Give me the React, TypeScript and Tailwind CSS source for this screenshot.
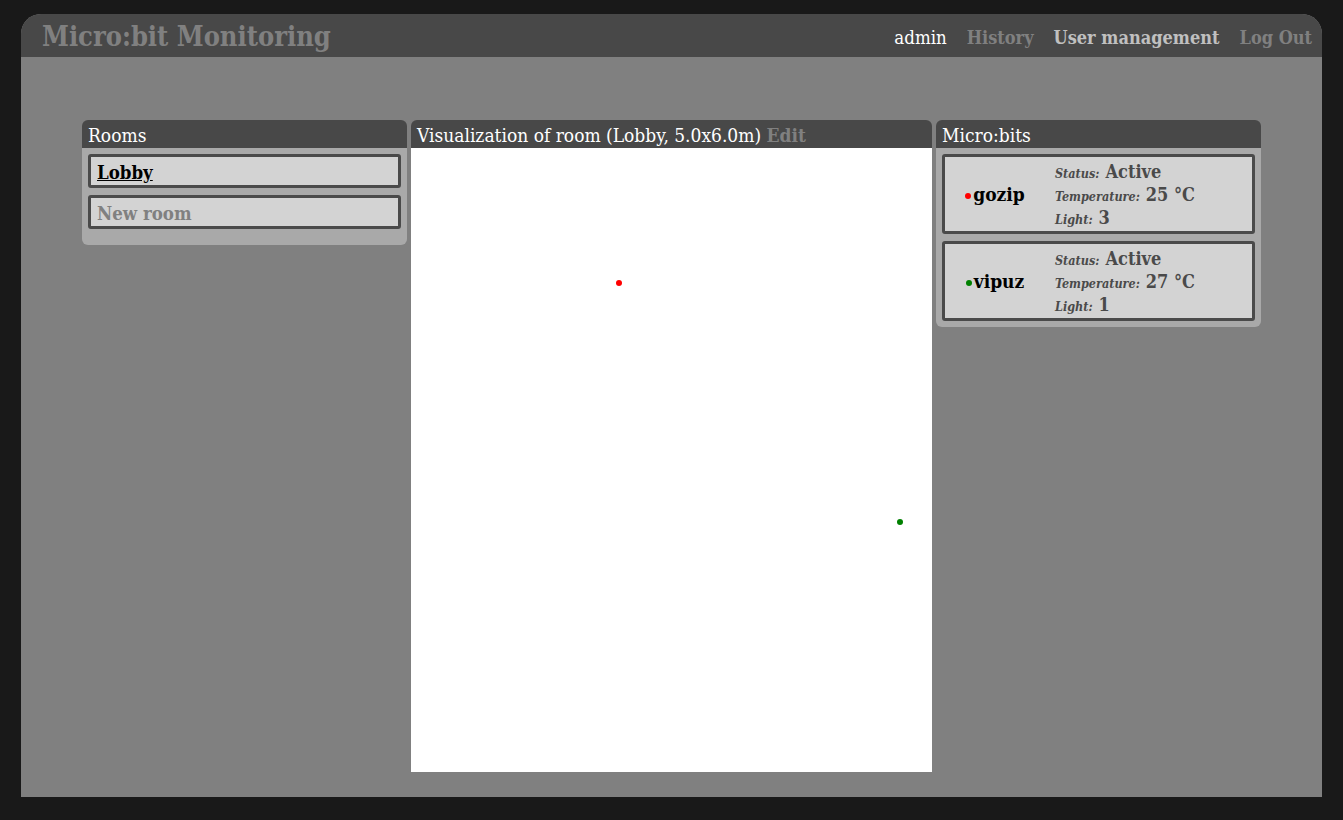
const serif = "font-['DejaVu_Serif_Condensed','DejaVu_Serif','Liberation_Serif',serif]";

const microbits = [
  { name: "gozip", dot: "bg-[#ff0000]", temp: 25, light: 3 },
  { name: "vipuz", dot: "bg-[#008000]", temp: 27, light: 1 },
];

function Panel({ title, width, children, extra }: { title: string; width: string; children: React.ReactNode; extra?: React.ReactNode }) {
  return (
    <section className={`${width} flex flex-col self-start`}>
      <h2 className="h-[28px] rounded-t-[6px] bg-[#484848] px-[6px] pt-[4px] text-[19px] leading-[22px] text-white">
        {title}
        {extra}
      </h2>
      {children}
    </section>
  );
}

function Stat({ label, value }: { label: string; value: string }) {
  return (
    <div className="flex h-[23px] items-baseline gap-[6px] text-[#4a4a4a]">
      <span className="text-[12.5px] font-bold italic">{label}</span>
      <span className="text-[18px] font-bold">{value}</span>
    </div>
  );
}

export default function App() {
  return (
    <div className={`h-screen bg-[#191919] px-[21px] pb-[23px] pt-[14px] ${serif}`}>
      <div className="flex h-full flex-col overflow-hidden rounded-t-[20px] bg-[#808080]">
        <header className="flex h-[43px] items-center justify-between bg-[#484848] pl-[21px] pr-[10px] pt-[4px]">
          <h1 className="text-[27px] font-bold text-[#808080]">Micro:bit Monitoring</h1>
          <nav className="flex items-center gap-[20px] text-[18px]">
            <span className="text-[18.5px] text-white">admin</span>
            <span className="font-bold text-[#808080]">History</span>
            <span className="font-bold text-[#c0c0c0]">User management</span>
            <span className="font-bold text-[#808080]">Log Out</span>
          </nav>
        </header>

        <main className="mt-[63px] flex justify-center gap-[4px]">
          <Panel title="Rooms" width="w-[325px]">
            <div className="flex flex-col gap-[7px] rounded-b-[6px] bg-[#a9a9a9] px-[6px] pb-[16px] pt-[6px]">
              <div className="h-[34px] rounded-[3px] border-[3px] border-[#4a4a4a] bg-[#d3d3d3] px-[6px] text-[18.5px] font-bold leading-[31px] text-black underline">
                Lobby
              </div>
              <div className="h-[34px] rounded-[3px] border-[3px] border-[#4a4a4a] bg-[#d3d3d3] px-[6px] text-[18.5px] font-bold leading-[31px] text-[#808080]">
                New room
              </div>
            </div>
          </Panel>

          <Panel
            title="Visualization of room (Lobby, 5.0x6.0m) "
            width="w-[521px]"
            extra={<span className="font-bold text-[#808080]">Edit</span>}
          >
            <div className="relative h-[624px] bg-white">
              <span className="absolute left-[205px] top-[132px] h-[6px] w-[6px] rounded-full bg-[#ff0000]" />
              <span className="absolute left-[486px] top-[371px] h-[6px] w-[6px] rounded-full bg-[#008000]" />
            </div>
          </Panel>

          <Panel title="Micro:bits" width="w-[325px]">
            <div className="flex flex-col gap-[7px] rounded-b-[6px] bg-[#a9a9a9] px-[6px] pb-[6px] pt-[6px]">
              {microbits.map((m) => (
                <div
                  key={m.name}
                  className="flex h-[80px] items-center rounded-[3px] border-[3px] border-[#4a4a4a] bg-[#d3d3d3]"
                >
                  <div className="mr-[10px] flex w-[100px] items-center justify-center">
                    <span className={`mr-[2px] mt-[4px] h-[6px] w-[6px] rounded-full ${m.dot}`} />
                    <span className="text-[19px] font-bold text-black">{m.name}</span>
                  </div>
                  <div className="-mt-[3px] flex flex-col">
                    <Stat label="Status:" value="Active" />
                    <Stat label="Temperature:" value={`${m.temp} °C`} />
                    <Stat label="Light:" value={`${m.light}`} />
                  </div>
                </div>
              ))}
            </div>
          </Panel>
        </main>
      </div>
    </div>
  );
}
